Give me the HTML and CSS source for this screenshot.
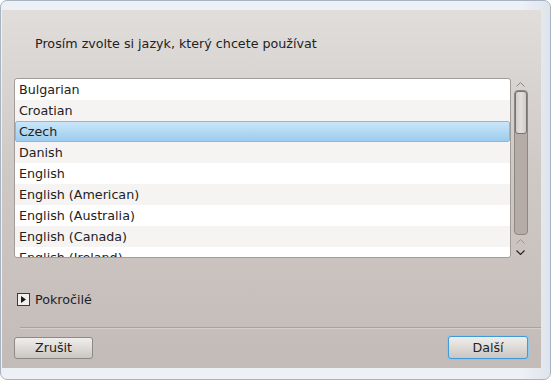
FILE: index.html
```html
<!DOCTYPE html>
<html lang="cs">
<head>
  <meta charset="UTF-8" />
  <title>Volba jazyka</title>
  <link rel="stylesheet" href="styles.css">
</head>
<body>

  <div class="window">
    <div class="dialog">
      <p class="prompt">Prosím zvolte si jazyk, který chcete používat</p>

      <div class="picker">
        <ul class="list">
          <li>Bulgarian</li>
          <li class="alt">Croatian</li>
          <li class="selected">Czech</li>
          <li class="alt">Danish</li>
          <li>English</li>
          <li class="alt">English (American)</li>
          <li>English (Australia)</li>
          <li class="alt">English (Canada)</li>
          <li>English (Ireland)</li>
        </ul>

        <div class="scrollbar">
          <div class="arrow-top">
            <svg width="9" height="5" viewBox="0 0 9 5"><polyline points="0.5,4.5 4.5,0.5 8.5,4.5" fill="none" stroke="#8a8683" stroke-width="1"/></svg>
          </div>
          <div class="track">
            <div class="handle"></div>
          </div>
          <div class="arrow-bottom">
            <svg width="9" height="5" viewBox="0 0 9 5"><polyline points="0.5,4.5 4.5,0.5 8.5,4.5" fill="none" stroke="#9c9592" stroke-width="1"/></svg>
            <svg width="9" height="5" viewBox="0 0 9 5"><polyline points="0.5,0.5 4.5,4.5 8.5,0.5" fill="none" stroke="#2a2a2a" stroke-width="1.2"/></svg>
          </div>
        </div>
      </div>

      <div class="advanced">
        <span class="expander">
          <svg width="11" height="11" viewBox="0 0 11 11"><polygon points="3,2 8,5.5 3,9" fill="#1a1a1a"/></svg>
        </span>
        Pokročilé
      </div>

      <div class="separator"></div>

      <div class="buttons">
        <button class="btn">Zrušit</button>
        <button class="btn default">Další</button>
      </div>
    </div>
  </div>

</body>
</html>
```

FILE: styles.css
```css
    body {
      margin: 0;
      padding: 0;
      background-color: #ffffff;
      font-family: 'DejaVu Sans', 'Liberation Sans', sans-serif;
      font-size: 12.7px;
      color: #222;
    }

    .window {
      width: 549px;
      height: 378px;
      border: 1px solid #a8b3c2;
      border-radius: 7px;
      background: linear-gradient(90deg, #edf0f5 95%, #dfe4ec);
      overflow: hidden;
    }

    .dialog {
      margin: 9px 0 0 1px;
      width: 539px;
      height: 358px;
      background: linear-gradient(180deg, #e0dddb 0%, #cfc9c6 45%, #c3bbb7 100%);
      display: flex;
      flex-direction: column;
    }

    .prompt {
      margin: 26px 0 0 33px;
      line-height: 16px;
      height: 16px;
    }

    .picker {
      display: flex;
      gap: 2px;
      margin: 26px 0 0 12px;
      height: 180px;
    }

    .list {
      list-style: none;
      margin: 0;
      padding: 0;
      width: 495px;
      height: 178px;
      border: 1px solid #a29c98;
      border-radius: 3px;
      background-color: #fff;
      overflow: hidden;
    }

    .list li {
      height: 21px;
      line-height: 21px;
      padding-left: 4px;
      box-sizing: border-box;
    }

    .list li.alt {
      background-color: #f5f4f2;
    }

    .list li.selected {
      background: linear-gradient(180deg, #c9e6f9, #9dccee);
      border: 1px solid #80bce6;
      border-radius: 2px;
      line-height: 19px;
      padding-left: 3px;
    }

    .scrollbar {
      width: 15px;
      display: flex;
      flex-direction: column;
      align-items: center;
    }

    .arrow-top {
      height: 12px;
      display: flex;
      align-items: center;
    }

    .track {
      width: 12px;
      height: 143px;
      border: 1px solid #8e8783;
      border-radius: 4px;
      background-color: #b5aca8;
      margin-left: 1px;
    }

    .handle {
      height: 41px;
      width: 10px;
      border: 1px solid #7a7470;
      border-radius: 3px;
      background: linear-gradient(90deg, #d2cecb, #e2dfdd 50%, #cfcbc8);
    }

    .arrow-bottom {
      flex: 1;
      display: flex;
      flex-direction: column;
      align-items: center;
      justify-content: center;
      gap: 6px;
    }

    .advanced {
      display: flex;
      align-items: center;
      gap: 5px;
      margin: 35px 0 0 15px;
      height: 13px;
      line-height: 13px;
    }

    .expander {
      width: 11px;
      height: 11px;
      border: 1px solid #3a3a3a;
      background-color: #f2f0ee;
      display: flex;
    }

    .separator {
      margin: 21px 0 0 18px;
      height: 0;
      border-top: 1px solid #aaa29e;
      border-bottom: 1px solid #d5cfcb;
    }

    .buttons {
      display: flex;
      justify-content: space-between;
      align-items: center;
      margin: 7px 13px 0 12px;
    }

    .btn {
      font-family: 'DejaVu Sans', 'Liberation Sans', sans-serif;
      font-size: 12.7px;
      color: #222;
      width: 79px;
      height: 22px;
      padding: 0;
      border: 1px solid #8f8985;
      border-radius: 3px;
      background: linear-gradient(180deg, #f0eeec, #cbc6c3);
    }

    .btn.default {
      width: 80px;
      height: 23px;
      border: 1px solid #3f9bd8;
      box-shadow: 0 0 0 1px #8cc7ee;
    }
```
